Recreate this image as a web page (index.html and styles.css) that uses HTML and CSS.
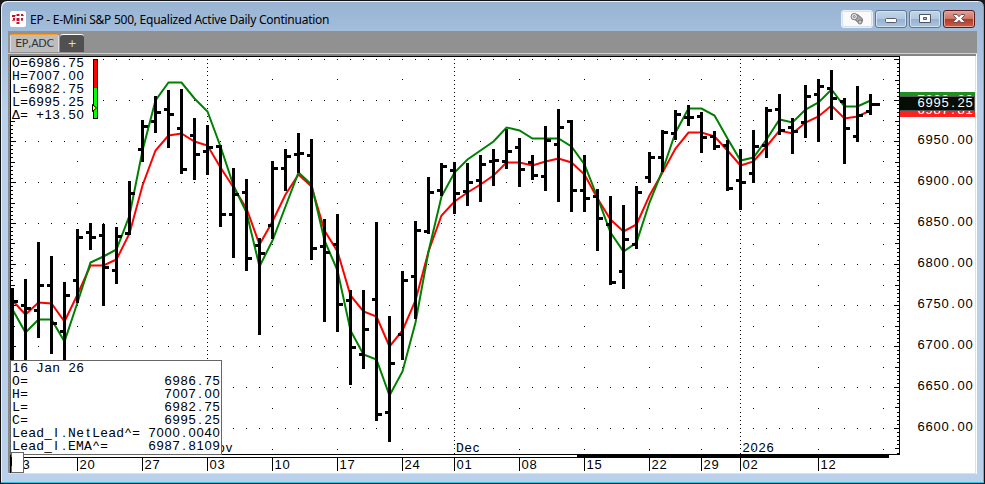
FILE: index.html
```html
<!DOCTYPE html>
<html lang="en">
<head>
  <meta charset="UTF-8" />
  <title>EP - E-Mini S&amp;P 500</title>
  <link rel="stylesheet" href="styles.css">
</head>
<body>
  <div class="window">
    <div class="titlebar">
      <svg class="app-icon" width="16" height="16" viewBox="0 0 16 16">
        <rect width="16" height="16" rx="2" fill="#fff" />
        <g fill="#c8102e">
          <rect x="2" y="4" width="3" height="2" /><rect x="3" y="7" width="2" height="2" />
          <rect x="6.500" y="3" width="3" height="2" /><rect x="6.500" y="7" width="3" height="3" />
          <rect x="6.500" y="11" width="3" height="2" /><rect x="11" y="3" width="2" height="2" />
          <rect x="11" y="7" width="2" height="2" />
        </g>
        <g fill="#d9607a">
          <rect x="2" y="9" width="3" height="1" /><rect x="5" y="4" width="1" height="1" />
          <rect x="11" y="9" width="2" height="1" /><rect x="13" y="4" width="1" height="1" />
        </g>
      </svg>
      <span class="title">EP - E-Mini S&amp;P 500, Equalized Active Daily Continuation</span>
      <div class="controls">
        <button class="ctl pin">
          <svg width="14" height="14" viewBox="0 0 14 14" fill="#e6e6e6" stroke="#777">
            <rect x="3.5" y="3.8" width="9.5" height="5.4" rx="2.7" transform="rotate(42 8 6.5)" fill="#a8a8a8" />
            <circle cx="4.3" cy="4.6" r="3.2" /><circle cx="4.3" cy="4.6" r="1" fill="#fff" />
            <circle cx="10" cy="10" r="2" fill="#c8c8c8" />
          </svg>
        </button>
        <button class="ctl">
          <svg width="12" height="12" viewBox="0 0 12 12"><rect x=".5" y="5.500" width="11" height="4" rx="1" fill="#fff" stroke="#555b66" /></svg>
        </button>
        <button class="ctl">
          <svg width="12" height="12" viewBox="0 0 12 12"><path d="M.5 1.500h11v8H.500zM4.500 4.500v2h3v-2z" fill="#fff" fill-rule="evenodd" stroke="#4c5564" /></svg>
        </button>
        <button class="ctl close">
          <svg width="12" height="12" viewBox="0 0 12 12"><path d="M.5 1.500h3.500l2 2.200 2-2.200h3.500v1L8.500 5.500l3 3v1H8L6 7.300 4 9.500H.500v-1l3-3-3-3z" fill="#fff" stroke="#5a4650" stroke-width=".9" /></svg>
        </button>
      </div>
    </div>
    <div class="client">
      <div class="tabs">
        <div class="tab active">EP,ADC</div>
        <div class="tab add">+</div>
      </div>
      <svg id="chart" class="chart" width="969" height="421" viewBox="8 53 969 421"></svg>
    </div>
  </div>
  <script src="chart.js"></script>
</body>
</html>
```
FILE: styles.css
```css
body {
  margin: 0;
  background: #1a1a1a;
  overflow: hidden;
}
.window {
  box-sizing: border-box;
  width: 985px;
  height: 484px;
  border: 1px solid #111;
  border-radius: 7px 7px 0 0;
  background: linear-gradient(#98b4d2, #a3bddb 30px, #b9d1ea 110px, #b9d1ea);
  box-shadow: inset -1px -1px 0 #35c3e0, inset 1px 1px 0 #e8f1fa;
}
.titlebar {
  display: flex;
  align-items: center;
  box-sizing: border-box;
  height: 30px;
  padding: 6px 9px 0 9px;
  border-radius: 6px 6px 0 0;
}
.app-icon {
  display: block;
}
.title {
  margin-left: 4px;
  font: 12px "Noto Sans", "Open Sans", sans-serif;
  letter-spacing: -0.25px;
  white-space: nowrap;
  color: #000;
}
.controls {
  display: flex;
  gap: 2px;
  margin-left: auto;
}
.ctl {
  display: flex;
  align-items: center;
  justify-content: center;
  box-sizing: border-box;
  width: 32px;
  height: 18px;
  padding: 0;
  border: 1px solid #5f7893;
  border-radius: 3px;
  background: linear-gradient(#c3d5e8, #b2c8e0 48%, #95b1cf 52%, #a9c6e2);
  box-shadow: inset 0 0 0 1px #d3e1ef;
}
.pin {
  border-color: #e9eef4;
  background: #fafafa;
}
.close {
  border-color: #5b1a1a;
  background: linear-gradient(#dfa397, #cd7565 48%, #b33a24 52%, #cd5e45);
  box-shadow: inset 0 0 0 1px #e0a79c;
}
.client {
  width: 969px;
  height: 443px;
  margin-left: 7px;
  background: #fff;
}
.tabs {
  display: flex;
  align-items: flex-end;
  gap: 1px;
  box-sizing: border-box;
  height: 22px;
  padding: 0 2px 1px;
  background: #919191;
}
.tab {
  box-sizing: border-box;
  height: 18px;
  border-radius: 3px 3px 0 0;
  font: 11px/17px "DejaVu Sans", sans-serif;
  text-align: center;
}
.active {
  width: 49px;
  border: 1px solid #dedede;
  border-top-color: #ff9a1c;
  border-bottom: 0;
  background: #bdbdbd;
  color: #333;
  letter-spacing: -0.4px;
}
.add {
  width: 24px;
  border-top: 1px solid #fff;
  background: #505050;
  color: #ddd;
}
.chart {
  display: block;
  font: 13px "Liberation Sans", Arial, sans-serif;
}
.wide {
  font-family: "Liberation Mono", "Courier New", monospace;
}
.crisp {
  shape-rendering: crispEdges;
}
.ema,
.netlead {
  fill: none;
  stroke-width: 2;
}
.ema {
  stroke: #f00;
}
.netlead {
  stroke: #008000;
}
```
FILE: chart.js
```js
// [open, high, low, close] for each day, in chart pixels
const bars = [
  [null, 288, 360, 301], [305, 279, 361, 308], [310, 242, 338, 285], [285, 256, 354, 323],
  [331, 282, 361, 295], [280, 229, 303, 237], [232, 223, 250, 237], [235, 224, 306, 267],
  [270, 227, 284, 236], [233, 181, 235, 193], [149, 120, 162, 126], [121, 96, 133, 112],
  [109, 90, 148, 114], [128, 89, 174, 169], [135, 118, 180, 154], [151, 125, 175, 147],
  [146, 145, 227, 214], [214, 168, 258, 194], [192, 179, 271, 258], [245, 238, 335, 253],
  [225, 161, 239, 168], [168, 149, 191, 156], [154, 133, 173, 153], [155, 139, 260, 248],
  [246, 219, 322, 252], [244, 214, 332, 304], [300, 290, 385, 347], [354, 290, 369, 329],
  [299, 222, 421, 414], [412, 316, 442, 363], [334, 271, 360, 280], [276, 221, 319, 230],
  [231, 177, 234, 192], [190, 163, 196, 166], [170, 162, 214, 193], [191, 163, 206, 182],
  [180, 155, 202, 164], [161, 149, 186, 160], [161, 129, 169, 151], [147, 138, 187, 169],
  [162, 155, 180, 175], [176, 126, 191, 140], [144, 109, 202, 127], [121, 120, 212, 190],
  [190, 155, 212, 198], [196, 189, 251, 218], [224, 196, 285, 282], [271, 205, 289, 239],
  [244, 186, 249, 192], [177, 152, 183, 157], [157, 130, 172, 132], [133, 110, 140, 114],
  [117, 105, 126, 117], [116, 112, 153, 137], [136, 131, 150, 146], [145, 140, 191, 188],
  [180, 149, 210, 182], [173, 130, 183, 146], [145, 107, 158, 110], [109, 94, 135, 130],
  [127, 118, 154, 131], [122, 85, 138, 96], [94, 79, 142, 86], [88, 70, 120, 98],
  [101, 98, 164, 128], [136, 86, 142, 115], [111, 94, 115, 104]
];
const ema = [
  300, 314, 302, 303, 321, 294, 265, 265, 259, 233, 185, 150, 135, 133, 141, 145, 167, 187,
  208, 244, 221, 194, 174, 186, 230, 251, 295, 311, 316, 346, 330, 300, 251, 215, 201, 192,
  184, 175, 162, 162, 165, 161, 158, 162, 174, 198, 219, 231, 224, 195, 172, 148, 132, 132,
  136, 150, 165, 161, 146, 130, 133, 122, 116, 105, 118, 116, 110
];
const netLead = [
  309, 332, 319, 319, 341, 302, 262, 256, 249, 215, 150, 100, 82, 82, 98, 111, 146, 185,
  212, 266, 240, 206, 172, 184, 240, 270, 330, 354, 359, 395, 371, 322, 251, 196, 172, 159,
  150, 141, 127, 130, 138, 138, 138, 146, 164, 197, 232, 251, 242, 202, 170, 132, 108, 108,
  115, 138, 160, 157, 139, 119, 122, 109, 102, 89, 106, 106, 100
];

const dayX = i => 12 + 13 * i;
const rect = (x, y, w, h, fill = '#000') =>
  `<rect x="${x}" y="${y}" width="${w}" height="${h}" fill="${fill}"/>`;

// every character is centred in its own 8px cell, wide capitals use the mono face to fit it
function text(x, y, str, fill = '#000') {
  const xs = [...str].map((c, i) => x + 4 + i * 8).join(' ');
  const chars = str.replace(/[OHCNDEMAΔ]/g, c => `<tspan class="wide">${c}</tspan>`);
  return `<text x="${xs}" y="${y}" text-anchor="middle" fill="${fill}" xml:space="preserve">${chars}</text>`;
}

let grid = '';
const monthX = [207, 454, 740];
const weekX = [77, 142, 272, 337, 402, 519, 584, 649, 701, 753, 818, 883];
for (let y = 59; y < 454; y += 41) {
  for (let x = 25; x < 890; x += 13) {
    if (!monthX.includes(x)) grid += rect(x, y, 1, 1);
  }
}
[79, 120, 161, 203, 244, 285, 326, 367, 408, 449].forEach(y => {
  weekX.forEach(x => { grid += rect(x, y, 1, 1); });
});

let axes = '';
for (let n = 0; n < 97; n++) {
  const y = Math.round(59 + n * 4.1);
  if (y > 453) break;
  monthX.forEach(x => { grid += rect(x, y, 1, 1); });
  const len = n % 10 === 0 ? 5 : n % 5 === 0 ? 4 : 2;
  axes += rect(11, y, len, 1) + rect(899 - len, y, len, 1);
}
axes += rect(10, 56, 890, 1) + rect(10, 56, 1, 417) + rect(899, 56, 1, 399);
axes += rect(10, 454, 890, 1) + rect(10, 457, 879, 1) + rect(577, 454, 312, 4);

let ohlc = '';
bars.forEach(([o, h, l, c], i) => {
  const x = dayX(i);
  ohlc += rect(x - 1, h, 3, l - h);
  if (o !== null) ohlc += rect(x - 4, o - 1, 3, 3);
  ohlc += rect(x + 2, c - 1, i === 66 ? 8 : 4, 3);
});

const points = arr => arr.map((y, i) => `${dayX(i) + 0.5},${y + 0.5}`).join(' ');

const days = {
  12: '13', 77: '20', 142: '27', 207: '03', 272: '10', 337: '17', 402: '24', 454: '01',
  519: '08', 584: '15', 649: '22', 701: '29', 740: '02', 818: '12'
};
let labels = '';
Object.keys(days).forEach(x => {
  labels += `<g class="crisp">${rect(x, 457, 1, 14)}</g>` + text(+x + 2, 469, days[x]);
});
labels += text(209, 452, 'Nov') + text(456, 452, 'Dec') + text(742, 452, '2026');
for (let p = 6950, y = 144; p >= 6600; p -= 50, y += 41) {
  labels += text(917, y, p + '.00');
}

const legend = rect(11, 57, 81, 64, '#fff') +
  ['O=6986.75', 'H=7007.00', 'L=6982.75', 'L=6995.25', 'Δ= +13.50']
    .map((s, i) => text(12, 67 + i * 13, s)).join('') +
  `<g class="crisp">${rect(93, 59, 5, 60)}${rect(94, 60, 3, 28, '#f00')}${rect(94, 88, 3, 30, '#0f0')}</g>` +
  '<path d="M92.5 104.500v7l4-3.500z" fill="#ff0" stroke="#000"/>';

// marker values are partly covered by the last price
const markers = rect(900, 92, 75, 13, '#1f8f1f') + text(917, 104, '7000.00', '#fff') +
  rect(900, 104, 75, 13, '#ff2020') + text(917, 114, '6987.81', '#fff') +
  rect(900, 96, 75, 15, '#555') + rect(900, 97, 74, 13, '#050d05') +
  text(917, 107, '6995.25', '#fff');

const rows = [
  ['O=', '6986.75'], ['H=', '7007.00'], ['L=', '6982.75'], ['C=', '6995.25'],
  ['Lead_I.NetLead^=', '7000.0040'], ['Lead_I.EMA^=', '6987.8109']
];
const info = `<g class="crisp">${rect(10, 360, 212, 95, '#666')}${rect(11, 361, 210, 93, '#fff')}</g>` +
  text(12, 372, '16 Jan 26') +
  rows.map(([k, v], i) => text(12, 385 + i * 13, k) + text(220 - v.length * 8, 385 + i * 13, v)).join('') +
  `<g class="crisp">${rect(11, 452, 13, 21, '#666')}${rect(12, 453, 11, 19, '#fff')}${rect(11, 457, 1, 9)}</g>`;

document.getElementById('chart').innerHTML =
  rect(8, 53, 969, 1, '#d0d0d0') + rect(8, 54, 968, 2, '#848484') +
  rect(8, 54, 2, 419, '#8a8a8a') + rect(975, 56, 1, 418, '#e0e0e0') + rect(8, 473, 968, 1, '#e0e0e0') +
  `<g class="crisp">${grid}${axes}</g>` +
  `<polyline class="ema" points="${points(ema)}"/>` +
  `<polyline class="netlead" points="${points(netLead)}"/>` +
  `<g class="crisp">${ohlc}</g>` + rect(8, 57, 2, 416, '#8a8a8a') + labels + legend + markers + info;
```
